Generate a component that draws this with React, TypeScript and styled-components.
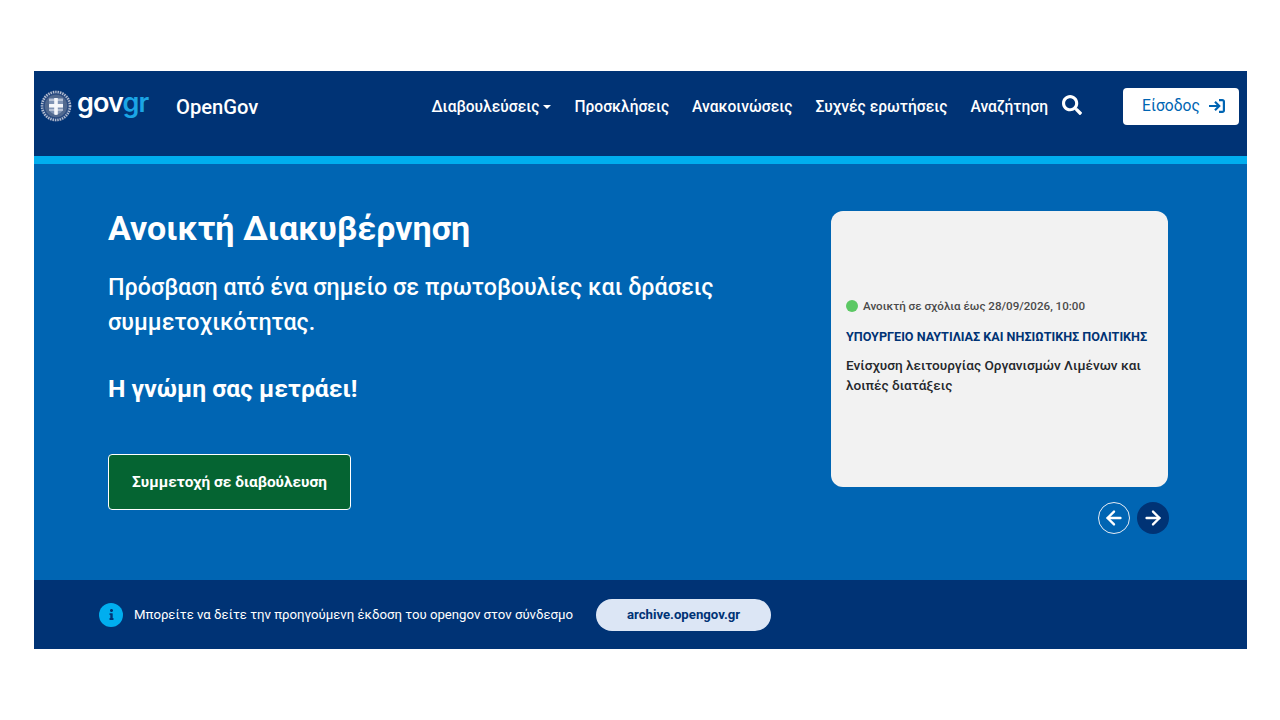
import React from 'react';
import styled, { createGlobalStyle } from 'styled-components';
import { FaSearch, FaInfo } from 'react-icons/fa';
import { ArrowLeft, ArrowRight } from 'lucide-react';

const GlobalStyle = createGlobalStyle`
  html, body {
    margin: 0;
    padding: 0;
    background: #fff;
    font-family: Roboto, "Liberation Sans", sans-serif;
  }
`;

const navItems = ['Προσκλήσεις', 'Ανακοινώσεις', 'Συχνές ερωτήσεις', 'Αναζήτηση'];

const Emblem = () => (
  <svg width="32" height="32" viewBox="0 0 32 32">
    <circle cx="16" cy="16" r="15.4" fill="#2a4b80" />
    <circle cx="16" cy="16" r="14" fill="none" stroke="#b4c0d4" strokeWidth="2.6" strokeDasharray="1.3 1.1" />
    <circle cx="16" cy="16" r="11.2" fill="#51698f" />
    <path d="M9 8h14v10.5c0 3.4-3.5 5.4-7 6.3-3.5-.9-7-2.9-7-6.3z" fill="#7f93b4" />
    <path d="M9 10h14M9 20h14" stroke="#c6d0e0" strokeWidth="1.3" />
    <path d="M14.2 8h3.6v6h5.2v3.6h-5.2v7l-1.8.3-1.8-.3v-7H9V14h5.2z" fill="#f4f6fa" />
  </svg>
);

const LoginIcon = () => (
  <svg width="17" height="14" viewBox="0 0 17 14" fill="none" stroke="#0065b3" strokeWidth="2.2">
    <path d="M1 7h9.5M7 2.8 11.2 7 7 11.2" />
    <path d="M11 1.1h3.4a1.5 1.5 0 0 1 1.5 1.5v8.8a1.5 1.5 0 0 1-1.5 1.5H11" />
  </svg>
);

const App: React.FC = () => {
  return (
    <Page>
      <GlobalStyle />
      <Frame>
        <Header>
          <Brand>
            <Emblem />
            <LogoText>
              gov<span>gr</span>
            </LogoText>
          </Brand>
          <SiteName>OpenGov</SiteName>
          <Nav>
            <NavLink>
              Διαβουλεύσεις
              <Caret />
            </NavLink>
            {navItems.map((item) => (
              <NavLink key={item}>{item}</NavLink>
            ))}
          </Nav>
          <SearchButton>
            <FaSearch size={20} />
          </SearchButton>
          <LoginButton>
            Είσοδος
            <LoginIcon />
          </LoginButton>
        </Header>
        <Stripe />
        <Hero>
          <HeroText>
            <Title>Ανοικτή Διακυβέρνηση</Title>
            <Lead>Πρόσβαση από ένα σημείο σε πρωτοβουλίες και δράσεις συμμετοχικότητας.</Lead>
            <Motto>Η γνώμη σας μετράει!</Motto>
            <CtaButton>Συμμετοχή σε διαβούλευση</CtaButton>
          </HeroText>
          <Carousel>
            <Card>
              <Status>
                <Dot />
                Ανοικτή σε σχόλια έως 28/09/2026, 10:00
              </Status>
              <Ministry>ΥΠΟΥΡΓΕΙΟ ΝΑΥΤΙΛΙΑΣ ΚΑΙ ΝΗΣΙΩΤΙΚΗΣ ΠΟΛΙΤΙΚΗΣ</Ministry>
              <CardTitle>Ενίσχυση λειτουργίας Οργανισμών Λιμένων και λοιπές διατάξεις</CardTitle>
            </Card>
            <Arrows>
              <ArrowButton>
                <ArrowLeft size={22} strokeWidth={2.6} />
              </ArrowButton>
              <ArrowButton filled>
                <ArrowRight size={22} strokeWidth={2.6} />
              </ArrowButton>
            </Arrows>
          </Carousel>
        </Hero>
        <Notice>
          <InfoBadge>
            <FaInfo size={11} />
          </InfoBadge>
          <NoticeText>Μπορείτε να δείτε την προηγούμενη έκδοση του opengov στον σύνδεσμο</NoticeText>
          <ArchivePill>archive.opengov.gr</ArchivePill>
        </Notice>
      </Frame>
    </Page>
  );
};

const Page = styled.div`
  width: 1280px;
  height: 720px;
  padding: 71px 33px 0 34px;
  box-sizing: border-box;
  overflow: hidden;
`;

const Frame = styled.div`
  display: flex;
  flex-direction: column;
  height: 578px;
`;

const Header = styled.header`
  display: flex;
  align-items: center;
  height: 85px;
  padding: 0 8px 15px 6px;
  box-sizing: border-box;
  background: #003375;
  color: #fff;
`;

const Brand = styled.div`
  display: flex;
  align-items: center;
  gap: 5px;
  width: 136px;
`;

const LogoText = styled.div`
  font-family: Inter, sans-serif;
  font-size: 27px;
  font-weight: 600;
  line-height: 30px;
  letter-spacing: -0.9px;
  margin-top: -6px;

  span {
    color: #1ba5e5;
  }
`;

const SiteName = styled.div`
  font-size: 20.2px;
  font-weight: 500;
  margin-top: 1px;
`;

const Nav = styled.nav`
  display: flex;
  align-items: center;
  gap: 23px;
  margin-left: 173px;
  margin-top: 1px;
`;

const NavLink = styled.a`
  display: flex;
  align-items: center;
  font-size: 15.6px;
  font-weight: 500;
  color: #fff;
`;

const Caret = styled.span`
  margin-left: 4px;
  border-top: 4.6px solid #fff;
  border-left: 4.6px solid transparent;
  border-right: 4.6px solid transparent;
`;

const SearchButton = styled.div`
  display: flex;
  margin-left: 14px;
  margin-top: -2px;
`;

const LoginButton = styled.button`
  display: flex;
  align-items: center;
  justify-content: center;
  gap: 8px;
  width: 116px;
  height: 37px;
  margin-left: auto;
  padding: 0 0 0 5px;
  border: 0;
  border-radius: 4px;
  background: #fff;
  color: #0065b3;
  font-family: inherit;
  font-size: 15.6px;
`;

const Stripe = styled.div`
  height: 8px;
  background: #00aeef;
`;

const Hero = styled.section`
  display: flex;
  justify-content: space-between;
  height: 416px;
  padding: 46px 79px 0 74px;
  box-sizing: border-box;
  background: #0065b3;
`;

const HeroText = styled.div`
  display: flex;
  flex-direction: column;
  align-items: flex-start;
  width: 640px;
  color: #fff;
`;

const Title = styled.h1`
  margin: -1px 0 0;
  font-size: 34px;
  font-weight: 700;
  line-height: 38px;
`;

const Lead = styled.p`
  margin: 23px 0 0;
  font-size: 23.3px;
  font-weight: 500;
  line-height: 35px;
`;

const Motto = styled.p`
  margin: 31px 0 0;
  font-size: 24.7px;
  font-weight: 700;
  line-height: 36px;
`;

const CtaButton = styled.button`
  width: 243px;
  height: 56px;
  margin-top: 47px;
  border: 1px solid #fff;
  border-radius: 4px;
  background: #056432;
  color: #fff;
  font-family: inherit;
  font-size: 15.4px;
  font-weight: 700;
`;

const Carousel = styled.div`
  display: flex;
  flex-direction: column;
  width: 337px;
  padding-top: 1px;
`;

const Card = styled.div`
  display: flex;
  flex-direction: column;
  justify-content: center;
  height: 276px;
  padding: 0 15px 4px;
  box-sizing: border-box;
  border-radius: 12px;
  background: #f2f2f2;
`;

const Status = styled.div`
  display: flex;
  align-items: center;
  gap: 5px;
  font-size: 11.6px;
  font-weight: 500;
  color: #4a4a4a;
`;

const Dot = styled.span`
  width: 12px;
  height: 12px;
  border-radius: 50%;
  background: #5cc864;
`;

const Ministry = styled.div`
  margin-top: 16px;
  font-size: 12.6px;
  font-weight: 700;
  color: #003375;
`;

const CardTitle = styled.div`
  margin-top: 11px;
  font-size: 13.6px;
  font-weight: 500;
  line-height: 20px;
  color: #25282c;
`;

const Arrows = styled.div`
  display: flex;
  justify-content: flex-end;
  gap: 7px;
  margin: 15px -1px 0 0;
`;

const ArrowButton = styled.div<{ filled?: boolean }>`
  display: flex;
  align-items: center;
  justify-content: center;
  width: 32px;
  height: 32px;
  box-sizing: border-box;
  border-radius: 50%;
  color: #fff;
  border: ${({ filled }) => (filled ? '0' : '1.5px solid #e4ebf4')};
  background: ${({ filled }) => (filled ? '#003375' : 'transparent')};
`;

const Notice = styled.div`
  display: flex;
  align-items: center;
  height: 69px;
  padding-left: 65px;
  box-sizing: border-box;
  background: #003375;
`;

const InfoBadge = styled.span`
  display: flex;
  align-items: center;
  justify-content: center;
  width: 24px;
  height: 24px;
  border-radius: 50%;
  background: #00aeef;
  color: #003375;
`;

const NoticeText = styled.span`
  margin-left: 11px;
  font-size: 13.2px;
  color: #fff;
`;

const ArchivePill = styled.span`
  display: flex;
  align-items: center;
  justify-content: center;
  width: 175px;
  height: 32px;
  margin-left: 23px;
  border-radius: 16px;
  background: #dce6f5;
  color: #003375;
  font-size: 13.2px;
  font-weight: 700;
`;

export default App;
